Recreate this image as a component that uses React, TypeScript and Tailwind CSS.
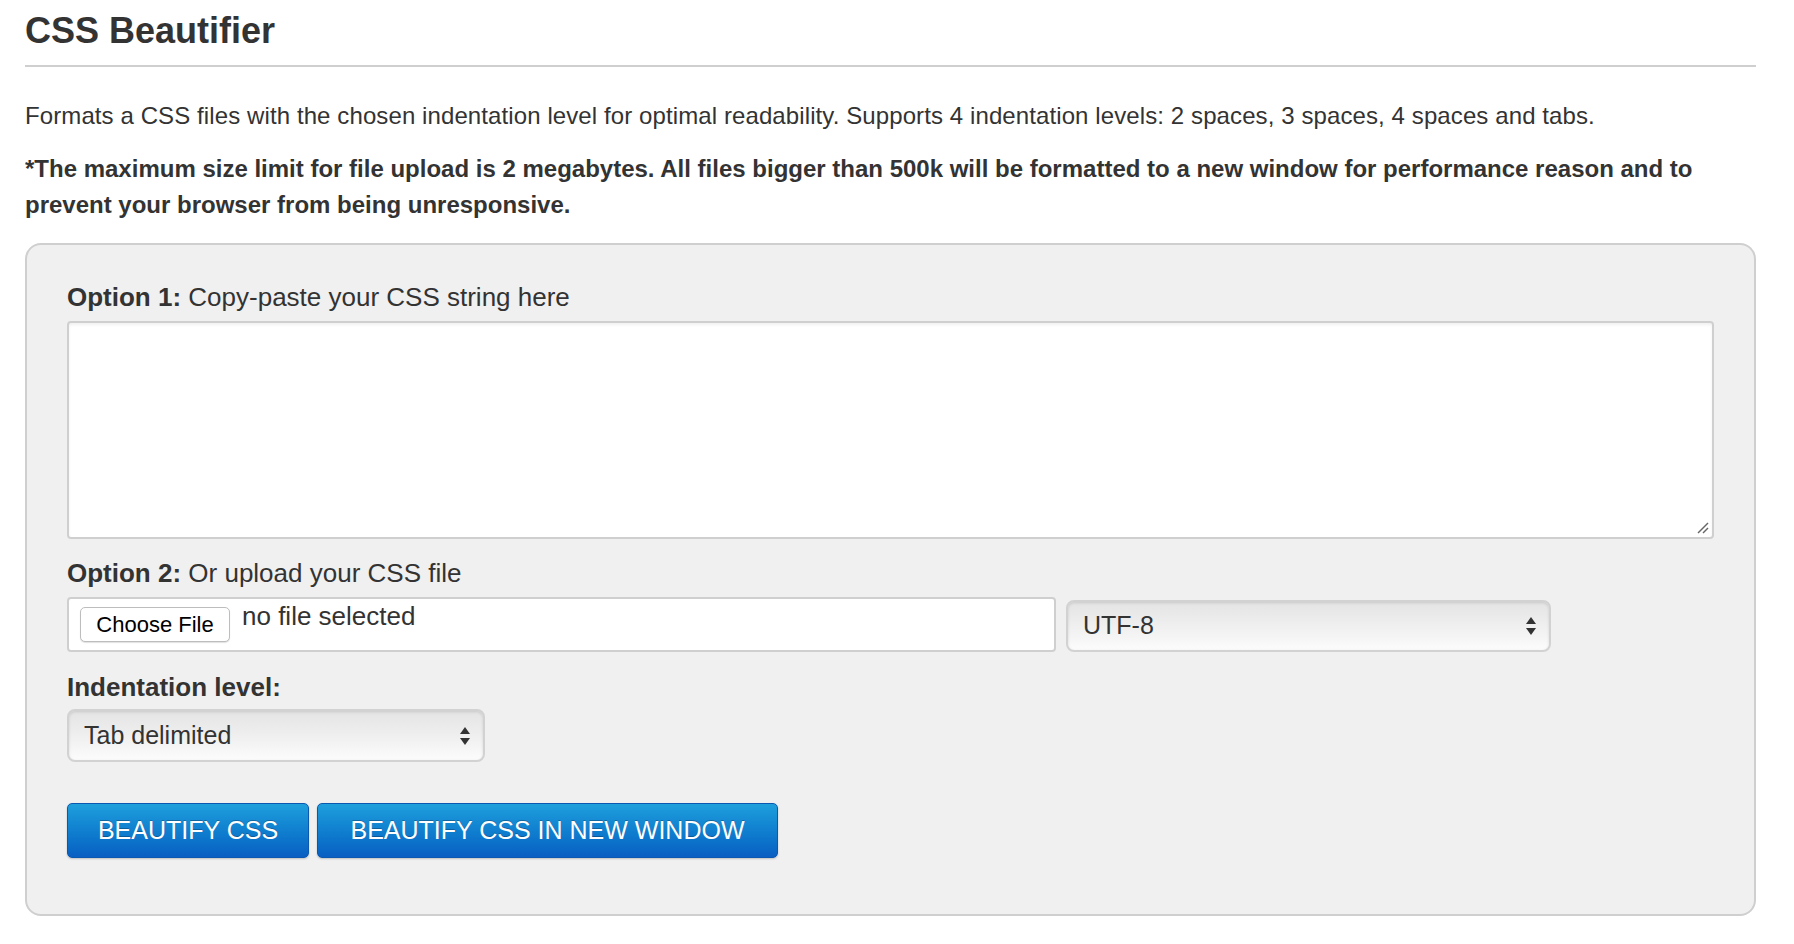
import React from 'react';

const font = { fontFamily: '"Liberation Sans", Arial, Helvetica, sans-serif' };

const SelectArrows = () => (
  <svg width="12" height="22" viewBox="0 0 12 22" className="shrink-0">
    <path d="M6 2 L11 9 L1 9 Z" fill="#333" />
    <path d="M6 20 L11 13 L1 13 Z" fill="#333" />
  </svg>
);

const FakeSelect = ({ value, className }: { value: string; className: string }) => (
  <div
    className={`flex items-center justify-between pl-[15px] pr-[12px] rounded-[8px] border-2 border-[#d2d2d2] bg-gradient-to-b from-[#e4e4e4] via-[#efefef] to-[#fcfcfc] shadow-[inset_0_1px_3px_rgba(0,0,0,0.12)] text-[25px] text-[#333] ${className}`}
  >
    <span>{value}</span>
    <SelectArrows />
  </div>
);

export default function App() {
  return (
    <div className="w-[1794px] min-h-[944px] bg-white text-[#333]" style={font}>
      <div className="w-[1731px] ml-[25px] pt-[11px]">
        {/* Titulo */}
        <h1 className="text-[36px] leading-[40px] font-bold text-[#333] pb-[14px] border-b-2 border-[#cfcfcf]">
          CSS Beautifier
        </h1>

        <p className="mt-[31px] text-[24px] leading-[36px] tracking-[0.1px]">
          Formats a CSS files with the chosen indentation level for optimal readability. Supports 4 indentation levels: 2 spaces, 3 spaces, 4 spaces and tabs.
        </p>
        <p className="mt-[17px] text-[24px] leading-[36px] font-bold">
          *The maximum size limit for file upload is 2 megabytes. All files bigger than 500k will be formatted to a new window for performance reason and to prevent your browser from being unresponsive.
        </p>

        {/* Panel del formulario */}
        <div className="mt-[20px] h-[673px] rounded-[16px] border-2 border-[#cfcfcf] bg-[#f0f0f0] px-[40px] pt-[37px]">
          <div className="text-[26px] leading-[30px]">
            <span className="font-bold">Option 1:</span> Copy-paste your CSS string here
          </div>
          <div className="relative mt-[9px] h-[218px] rounded-[4px] border-2 border-[#cfcfcf] bg-white shadow-[inset_0_2px_3px_rgba(0,0,0,0.06)]">
            <svg width="14" height="14" viewBox="0 0 14 14" className="absolute right-[3px] bottom-[3px]">
              <path d="M13 3 L3 13" stroke="#666" strokeWidth="1.5" />
              <path d="M13 8 L8 13" stroke="#666" strokeWidth="1.5" />
            </svg>
          </div>

          <div className="mt-[19px] text-[26px] leading-[30px]">
            <span className="font-bold">Option 2:</span> Or upload your CSS file
          </div>
          <div className="mt-[9px] flex items-end gap-[10px]">
            <div className="w-[989px] h-[55px] rounded-[4px] border-2 border-[#cfcfcf] bg-white flex items-start pl-[11px] pt-[8px] gap-[12px]">
              <div className="w-[150px] h-[35px] rounded-[5px] border border-[#bdbdbd] bg-white shadow-[0_1px_1px_rgba(0,0,0,0.12)] flex items-center justify-center text-[22px] text-black">
                Choose File
              </div>
              <span className="text-[26px] leading-[30px] -mt-[6px]">no file selected</span>
            </div>
            <FakeSelect value="UTF-8" className="w-[485px] h-[52px]" />
          </div>

          <div className="mt-[20px] text-[26px] leading-[30px] font-bold">Indentation level:</div>
          <FakeSelect value="Tab delimited" className="mt-[7px] w-[418px] h-[53px]" />

          <div className="mt-[41px] flex gap-[8px]">
            <button className="h-[55px] w-[242px] rounded-[5px] border border-[#0a58b0] bg-gradient-to-b from-[#1f9fdc] to-[#0a5fc2] text-white text-[25px] uppercase shadow-[0_1px_2px_rgba(0,0,0,0.2)] [text-shadow:0_-1px_0_rgba(0,0,0,0.25)]">
              Beautify CSS
            </button>
            <button className="h-[55px] w-[461px] rounded-[5px] border border-[#0a58b0] bg-gradient-to-b from-[#1f9fdc] to-[#0a5fc2] text-white text-[25px] uppercase shadow-[0_1px_2px_rgba(0,0,0,0.2)] [text-shadow:0_-1px_0_rgba(0,0,0,0.25)]">
              Beautify CSS in new window
            </button>
          </div>
        </div>
      </div>
    </div>
  );
}
